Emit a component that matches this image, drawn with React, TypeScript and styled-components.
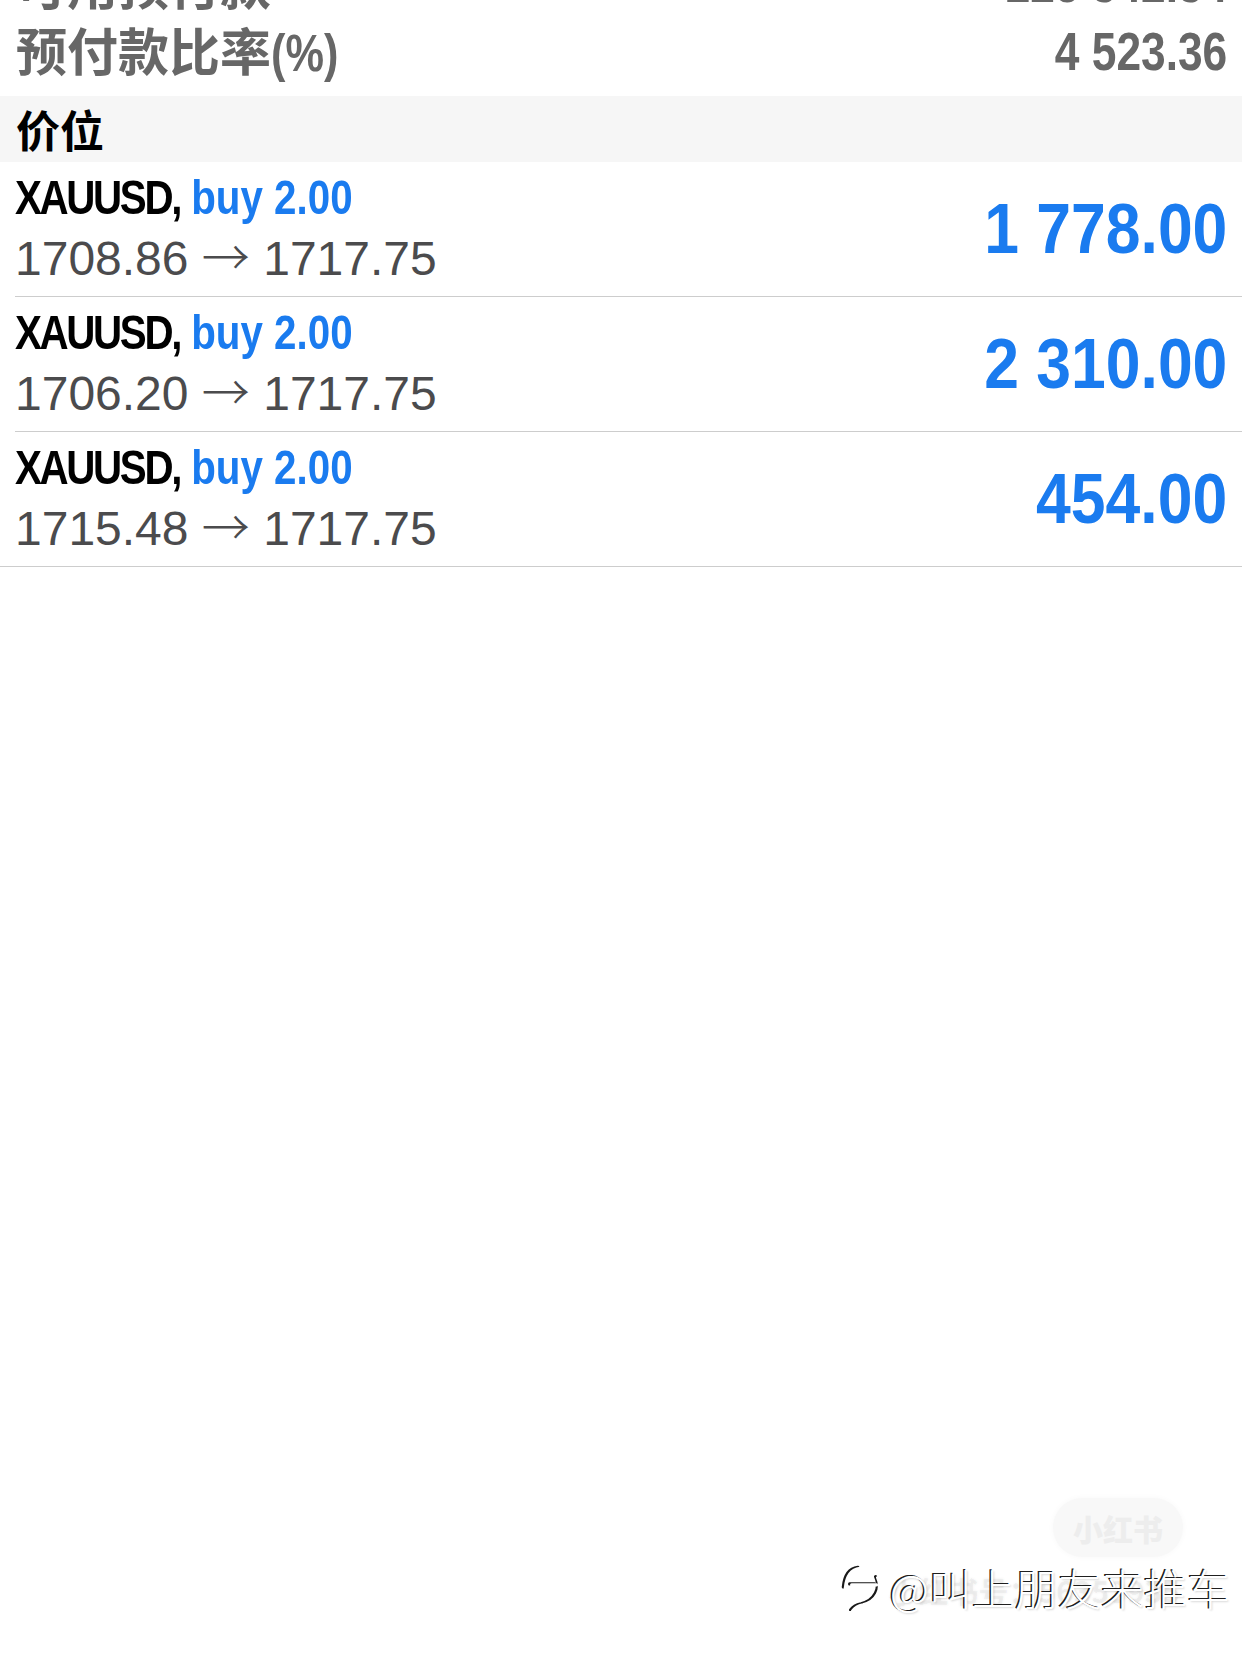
import React from "react";
import styled, { createGlobalStyle } from "styled-components";

const GlobalStyle = createGlobalStyle`
  html, body {
    margin: 0;
    padding: 0;
    background: #ffffff;
  }
  body {
    width: 1242px;
    height: 1656px;
    overflow: hidden;
    font-family: "Liberation Sans", "Noto Sans CJK SC", sans-serif;
  }
`;

const Page = styled.div`
  position: relative;
  width: 1242px;
  height: 1656px;
  overflow: hidden;
  background: #ffffff;
`;

const Summary = styled.div`
  display: flex;
  flex-direction: column;
  margin-top: -51px;
  padding-bottom: 11px;
`;

const SummaryRow = styled.div`
  display: flex;
  align-items: center;
  justify-content: space-between;
  height: 68px;
  padding: 0 15px 0 16px;
  color: #676767;
`;

const SummaryLabel = styled.span`
  font-family: "Noto Sans CJK SC", sans-serif;
  font-weight: 700;
  font-size: 51px;
  line-height: 1;
  white-space: nowrap;
`;

/* Condensed bold face: no condensed font is installed, so the bold sans is narrowed */
const Condensed = styled.span<{ $squeeze: number; $origin?: "left" | "right" }>`
  display: inline-block;
  font-family: "Liberation Sans", sans-serif;
  font-weight: 700;
  white-space: nowrap;
  transform: scaleX(${(p) => p.$squeeze});
  transform-origin: ${(p) => p.$origin ?? "left"} center;
`;

const Percent = styled(Condensed)`
  font-size: 51px;
  line-height: 1;
`;

const SummaryValue = styled(Condensed)`
  font-size: 54px;
  line-height: 1;
`;

const SectionHeader = styled.div`
  display: flex;
  align-items: center;
  height: 66px;
  padding: 0 16px;
  background: #f6f6f6;
  color: #000000;
  font-family: "Noto Sans CJK SC", sans-serif;
  font-weight: 700;
  font-size: 44px;
  line-height: 1;
`;

const PositionRow = styled.div<{ $last?: boolean }>`
  padding-left: ${(p) => (p.$last ? "0" : "15px")};
`;

const PositionInner = styled.div<{ $last?: boolean }>`
  display: flex;
  align-items: center;
  justify-content: space-between;
  padding: 12px 15px 13px ${(p) => (p.$last ? "15px" : "0")};
  border-bottom: 1px solid #cdcdcd;
`;

const PositionInfo = styled.div`
  display: flex;
  flex-direction: column;
  align-items: flex-start;
  gap: 13px;
`;

const Title = styled(Condensed)`
  font-size: 48px;
  line-height: 1;
  color: #000000;
`;

const Symbol = styled.span`
  letter-spacing: -2.8px;
`;

const Side = styled.span`
  color: #1a7bef;
`;

const Prices = styled.span`
  font-family: "Liberation Sans", sans-serif;
  font-size: 48px;
  line-height: 48px;
  height: 48px;
  color: #4b4b4d;
  white-space: nowrap;
`;

const Arrow = styled.span`
  font-family: "Noto Sans CJK SC", sans-serif;
  font-weight: 300;
  line-height: 0;
`;

const Profit = styled(Condensed)`
  font-size: 71px;
  line-height: 1;
  color: #1a7bef;
`;

const Watermark = styled.div`
  position: absolute;
  right: 12px;
  bottom: 44px;
  display: flex;
  align-items: center;
  gap: 6px;
`;

const WatermarkText = styled.span`
  font-family: "Noto Sans CJK SC", sans-serif;
  font-weight: 300;
  font-size: 43px;
  line-height: 1;
  color: #ffffff;
  text-shadow: -1.5px -1px 0 rgba(0, 0, 0, 0.9), 1px 1px 2px rgba(0, 0, 0, 0.15);
  white-space: nowrap;
`;

const GhostId = styled.span`
  position: absolute;
  right: 62px;
  bottom: 44px;
  font-family: "Noto Sans CJK SC", sans-serif;
  font-weight: 700;
  font-size: 30px;
  color: rgba(0, 0, 0, 0.05);
  text-shadow: 0 0 3px rgba(0, 0, 0, 0.06);
  white-space: nowrap;
`;

const GhostBadge = styled.div`
  position: absolute;
  right: 59px;
  bottom: 99px;
  width: 130px;
  height: 59px;
  border-radius: 30px;
  background: #f8f8f8;
  box-shadow: 0 0 6px rgba(0, 0, 0, 0.03);
  display: flex;
  align-items: center;
  justify-content: center;
  font-family: "Noto Sans CJK SC", sans-serif;
  font-weight: 900;
  font-size: 30px;
  color: #ededed;
`;

const LogoIcon = () => (
  <svg width="42" height="50" viewBox="0 0 40 48" style={{ filter: "drop-shadow(-1.5px -1px 0 rgba(0,0,0,0.9))" }}>
    <g fill="none" stroke="#ffffff" strokeWidth="3" strokeLinecap="round">
      <path d="M17 6 C9 7 4 14 3 25" />
      <path d="M9 22 L33 22" />
      <path d="M34 15 C39 26 33 38 20 41 C15 42 12 44 10 47" />
    </g>
  </svg>
);

type Position = { symbol: string; side: string; open: string; current: string; profit: string };

const positions: Position[] = [
  { symbol: "XAUUSD", side: "buy 2.00", open: "1708.86", current: "1717.75", profit: "1 778.00" },
  { symbol: "XAUUSD", side: "buy 2.00", open: "1706.20", current: "1717.75", profit: "2 310.00" },
  { symbol: "XAUUSD", side: "buy 2.00", open: "1715.48", current: "1717.75", profit: "454.00" },
];

export default function App() {
  return (
    <Page>
      <GlobalStyle />
      <Summary>
        <SummaryRow>
          <SummaryLabel>可用预付款</SummaryLabel>
          <SummaryValue $squeeze={0.82} $origin="right">225 342.34</SummaryValue>
        </SummaryRow>
        <SummaryRow>
          <SummaryLabel>
            预付款比率<Percent $squeeze={0.85}>(%)</Percent>
          </SummaryLabel>
          <SummaryValue $squeeze={0.82} $origin="right">4 523.36</SummaryValue>
        </SummaryRow>
      </Summary>
      <SectionHeader>价位</SectionHeader>
      {positions.map((p, i) => {
        const last = i === positions.length - 1;
        return (
          <PositionRow key={i} $last={last}>
            <PositionInner $last={last}>
              <PositionInfo>
                <Title $squeeze={0.84}>
                  <Symbol>{p.symbol},</Symbol> <Side>{p.side}</Side>
                </Title>
                <Prices>
                  {p.open} <Arrow>→</Arrow> {p.current}
                </Prices>
              </PositionInfo>
              <Profit $squeeze={0.88} $origin="right">{p.profit}</Profit>
            </PositionInner>
          </PositionRow>
        );
      })}
      <GhostBadge>小红书</GhostBadge>
      <GhostId>小红书号：56353935</GhostId>
      <Watermark>
        <LogoIcon />
        <WatermarkText>@叫上朋友来推车</WatermarkText>
      </Watermark>
    </Page>
  );
}
